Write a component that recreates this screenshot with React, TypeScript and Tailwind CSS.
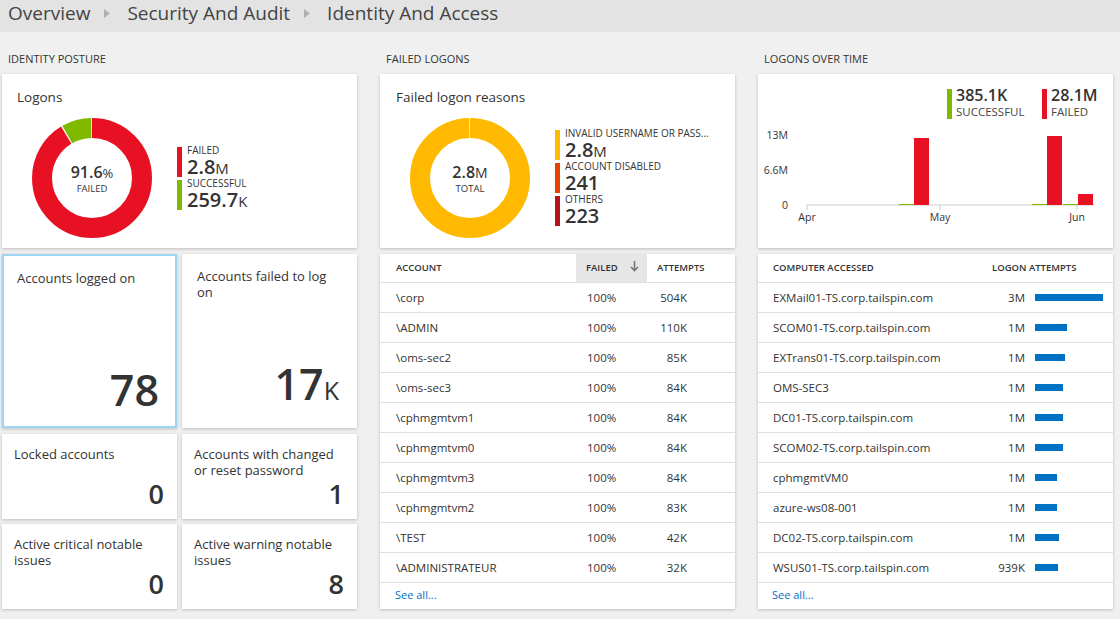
import React from "react";

const accounts = [
  { name: "\\corp", failed: "100%", attempts: "504K" },
  { name: "\\ADMIN", failed: "100%", attempts: "110K" },
  { name: "\\oms-sec2", failed: "100%", attempts: "85K" },
  { name: "\\oms-sec3", failed: "100%", attempts: "84K" },
  { name: "\\cphmgmtvm1", failed: "100%", attempts: "84K" },
  { name: "\\cphmgmtvm0", failed: "100%", attempts: "84K" },
  { name: "\\cphmgmtvm3", failed: "100%", attempts: "84K" },
  { name: "\\cphmgmtvm2", failed: "100%", attempts: "83K" },
  { name: "\\TEST", failed: "100%", attempts: "42K" },
  { name: "\\ADMINISTRATEUR", failed: "100%", attempts: "32K" },
];

const computers = [
  { name: "EXMail01-TS.corp.tailspin.com", value: "3M", bar: 68 },
  { name: "SCOM01-TS.corp.tailspin.com", value: "1M", bar: 32 },
  { name: "EXTrans01-TS.corp.tailspin.com", value: "1M", bar: 30 },
  { name: "OMS-SEC3", value: "1M", bar: 28 },
  { name: "DC01-TS.corp.tailspin.com", value: "1M", bar: 28 },
  { name: "SCOM02-TS.corp.tailspin.com", value: "1M", bar: 28 },
  { name: "cphmgmtVM0", value: "1M", bar: 22 },
  { name: "azure-ws08-001", value: "1M", bar: 22 },
  { name: "DC02-TS.corp.tailspin.com", value: "1M", bar: 24 },
  { name: "WSUS01-TS.corp.tailspin.com", value: "939K", bar: 23 },
];

const card = "bg-white shadow-[0_1px_3px_rgba(0,0,0,0.22)]";

function Donut({
  segments,
  children,
}: {
  segments: { frac: number; color: string }[];
  children: React.ReactNode;
}) {
  const c = 2 * Math.PI * 50;
  let offset = 0;
  return (
    <div className="relative w-[120px] h-[120px] shrink-0">
      <svg width="120" height="120" viewBox="0 0 120 120" className="-rotate-90">
        {segments.map((s, i) => {
          const len = s.frac * c;
          const el = (
            <circle
              key={i}
              cx="60"
              cy="60"
              r="50"
              fill="none"
              stroke={s.color}
              strokeWidth="20"
              strokeDasharray={`${Math.max(len - 1.2, 0)} ${c}`}
              strokeDashoffset={-offset}
            />
          );
          offset += len;
          return el;
        })}
      </svg>
      <div className="absolute inset-0 flex flex-col items-center justify-center text-[#333]">
        {children}
      </div>
    </div>
  );
}

function LegendItem({ color, label, value, unit }: { color: string; label: string; value: string; unit?: string }) {
  return (
    <div className="flex h-[30px]">
      <div className="w-[5px] h-[30px] shrink-0" style={{ backgroundColor: color }} />
      <div className="pl-[5px] -mt-[2px] flex flex-col">
        <span className="text-[10px] leading-[11px] uppercase text-[#333] whitespace-nowrap">{label}</span>
        <span className="text-[20px] leading-[22px] font-semibold text-[#333]">
          {value}
          {unit && <span className="text-[15px] font-normal">{unit}</span>}
        </span>
      </div>
    </div>
  );
}

function Tile({
  title,
  value,
  unit,
  big,
  selected,
}: {
  title: React.ReactNode;
  value: string;
  unit?: string;
  big?: boolean;
  selected?: boolean;
}) {
  const pad = big
    ? selected
      ? "pl-[13px] pr-[16px] pt-[14px] pb-[12px] border-2 border-[#9fd3f2]"
      : "pl-[15px] pr-[18px] pt-[14px] pb-[14px]"
    : "pl-[12px] pr-[13px] pt-[12px] pb-[9px]";
  return (
    <div className={`${card} w-[175px] flex flex-col justify-between ${big ? "h-[174px]" : "h-[85px]"} ${pad}`}>
      <div className="text-[13px] leading-[16px] text-[#333]">{title}</div>
      <div
        className={`text-right text-[#333] ${big ? "text-[43px] leading-[48px] font-semibold" : "text-[27px] leading-[32px] font-semibold"}`}
      >
        {value}
        {unit && <span className="text-[25px] font-normal">{unit}</span>}
      </div>
    </div>
  );
}

function SectionTitle({ children }: { children: React.ReactNode }) {
  return <div className="pt-[19px] pb-[8px] pl-[6px] text-[11px] leading-[15px] text-[#333] uppercase">{children}</div>;
}

function Chart() {
  return (
    <svg width="355" height="124" viewBox="0 0 355 124" className="block">
      <g fontSize="10.5" fill="#333" fontFamily="Open Sans, sans-serif">
        <text x="30" y="15" textAnchor="end">13M</text>
        <text x="30" y="50" textAnchor="end">6.6M</text>
        <text x="30" y="85" textAnchor="end">0</text>
        <text x="49" y="97" textAnchor="middle">Apr</text>
        <text x="182" y="97" textAnchor="middle">May</text>
        <text x="319" y="97" textAnchor="middle">Jun</text>
      </g>
      <line x1="49" y1="81" x2="337" y2="81" stroke="#e6e6e6" strokeWidth="2" />
      <line x1="49" y1="81" x2="49" y2="86" stroke="#c8c8c8" />
      <line x1="182" y1="81" x2="182" y2="86" stroke="#c8c8c8" />
      <line x1="319" y1="81" x2="319" y2="86" stroke="#c8c8c8" />
      <rect x="141" y="80" width="15" height="1" fill="#7fba00" />
      <rect x="156" y="14" width="15" height="67" fill="#e81123" />
      <rect x="274" y="80" width="15" height="1" fill="#7fba00" />
      <rect x="289" y="12" width="15" height="69" fill="#e81123" />
      <rect x="305" y="80" width="15" height="1" fill="#7fba00" />
      <rect x="320" y="70" width="15" height="11" fill="#e81123" />
    </svg>
  );
}

function Chevron() {
  return (
    <svg width="6" height="9" viewBox="0 0 6 9" className="ml-[14px] mr-[17px] shrink-0">
      <path d="M0 0 L6 4.5 L0 9 Z" fill="#b0b0b0" />
    </svg>
  );
}

export default function App() {
  return (
    <div className="w-[1120px] h-[619px] bg-[#f0f0f0] font-['Open_Sans',sans-serif] overflow-hidden">
      <div className="h-[32px] bg-[#e3e3e3] flex items-center pl-[8px] pb-[5px] text-[19px] text-[#444] leading-none">
        <span>Overview</span>
        <Chevron />
        <span>Security And Audit</span>
        <Chevron />
        <span>Identity And Access</span>
      </div>

      <div className="flex gap-[23px] pl-[2px]">
        {/* Identity posture */}
        <div className="w-[355px]">
          <SectionTitle>Identity Posture</SectionTitle>
          <div className={`${card} h-[174px] pt-[13px]`}>
            <div className="pl-[15px] text-[13.5px] leading-[20px] text-[#333]">Logons</div>
            <div className="flex items-center mt-[11px] pl-[30px] gap-[25px]">
              <Donut
                segments={[
                  { frac: 0.916, color: "#e81123" },
                  { frac: 0.084, color: "#7fba00" },
                ]}
              >
                <div className="text-[16px] leading-[18px] font-semibold mt-[2px]">
                  91.6<span className="text-[13px] font-normal">%</span>
                </div>
                <div className="text-[9.5px] leading-[14px]">FAILED</div>
              </Donut>
              <div className="flex flex-col gap-[3px]">
                <LegendItem color="#e81123" label="Failed" value="2.8" unit="M" />
                <LegendItem color="#7fba00" label="Successful" value="259.7" unit="K" />
              </div>
            </div>
          </div>
          <div className="grid grid-cols-[175px_175px] gap-x-[5px] mt-[6px]">
            <Tile title="Accounts logged on" value="78" big selected />
            <Tile title={<>Accounts failed to log<br />on</>} value="17" unit="K" big />
          </div>
          <div className="grid grid-cols-[175px_175px] gap-x-[5px] mt-[6px]">
            <Tile title="Locked accounts" value="0" />
            <Tile title={<>Accounts with changed<br />or reset password</>} value="1" />
          </div>
          <div className="grid grid-cols-[175px_175px] gap-x-[5px] mt-[5px]">
            <Tile title={<>Active critical notable<br />issues</>} value="0" />
            <Tile title={<>Active warning notable<br />issues</>} value="8" />
          </div>
        </div>

        {/* Failed logons */}
        <div className="w-[355px]">
          <SectionTitle>Failed Logons</SectionTitle>
          <div className={`${card} h-[174px] pt-[13px]`}>
            <div className="pl-[16px] text-[13.5px] leading-[20px] text-[#333]">Failed logon reasons</div>
            <div className="flex items-center mt-[11px] pl-[30px] gap-[25px]">
              <Donut segments={[{ frac: 1, color: "#ffb900" }]}>
                <div className="text-[16px] leading-[18px] font-semibold mt-[2px]">
                  2.8<span className="text-[14px] font-normal">M</span>
                </div>
                <div className="text-[9.5px] leading-[14px]">TOTAL</div>
              </Donut>
              <div className="flex flex-col gap-[3px]">
                <LegendItem color="#ffb900" label="Invalid username or pass..." value="2.8" unit="M" />
                <LegendItem color="#ea4300" label="Account disabled" value="241" />
                <LegendItem color="#b4121d" label="Others" value="223" />
              </div>
            </div>
          </div>
          <div className={`${card} mt-[6px] h-[355px] text-[#333]`}>
            <div className="flex h-[29px] items-center text-[9.5px] font-semibold uppercase border-b border-[#e0e0e0]">
              <div className="w-[196px] pl-[16px]">Account</div>
              <div className="w-[71px] h-full bg-[#e6e6e6] flex items-center pl-[10px] relative">
                Failed
                <svg width="9" height="11" viewBox="0 0 9 11" className="absolute left-[54px] top-[7px]">
                  <path d="M4.5 0 V9 M1 6 L4.5 9.5 L8 6" stroke="#777" strokeWidth="1.6" fill="none" />
                </svg>
              </div>
              <div className="pl-[10px]">Attempts</div>
            </div>
            {accounts.map((a) => (
              <div key={a.name} className="flex h-[30px] items-center text-[11.5px] border-b border-[#e0e0e0]">
                <div className="w-[196px] pl-[16px]">{a.name}</div>
                <div className="w-[71px] pl-[11px]">{a.failed}</div>
                <div className="w-[40px] text-right">{a.attempts}</div>
              </div>
            ))}
            <div className="h-[25px] flex items-center pl-[15px] text-[11px] text-[#0072c6]">See all...</div>
          </div>
        </div>

        {/* Logons over time */}
        <div className="w-[355px]">
          <SectionTitle>Logons Over Time</SectionTitle>
          <div className={`${card} h-[174px] pt-[15px]`}>
            <div className="flex pl-[189px] h-[30px]">
              <div className="flex w-[95px]">
                <div className="w-[5px] h-[30px] bg-[#7fba00]" />
                <div className="pl-[4px] -mt-[3px] flex flex-col">
                  <span className="text-[16px] leading-[19px] font-semibold text-[#333]">385.1K</span>
                  <span className="text-[11.5px] leading-[14px] text-[#444]">SUCCESSFUL</span>
                </div>
              </div>
              <div className="flex">
                <div className="w-[5px] h-[30px] bg-[#e81123]" />
                <div className="pl-[4px] -mt-[3px] flex flex-col">
                  <span className="text-[16px] leading-[19px] font-semibold text-[#333]">28.1M</span>
                  <span className="text-[11.5px] leading-[14px] text-[#444]">FAILED</span>
                </div>
              </div>
            </div>
            <div className="mt-[5px]">
              <Chart />
            </div>
          </div>
          <div className={`${card} mt-[6px] h-[355px] text-[#333]`}>
            <div className="flex h-[29px] items-center text-[9.5px] font-semibold uppercase border-b border-[#e0e0e0]">
              <div className="w-[234px] pl-[15px]">Computer accessed</div>
              <div>Logon attempts</div>
            </div>
            {computers.map((c) => (
              <div key={c.name} className="flex h-[30px] items-center text-[11.5px] border-b border-[#e0e0e0]">
                <div className="w-[207px] pl-[15px] whitespace-nowrap">{c.name}</div>
                <div className="w-[60px] text-right">{c.value}</div>
                <div className="ml-[10px] w-[68px]">
                  <div className="h-[7px] bg-[#0072c6]" style={{ width: c.bar }} />
                </div>
              </div>
            ))}
            <div className="h-[25px] flex items-center pl-[14px] text-[11px] text-[#0072c6]">See all...</div>
          </div>
        </div>
      </div>
    </div>
  );
}
